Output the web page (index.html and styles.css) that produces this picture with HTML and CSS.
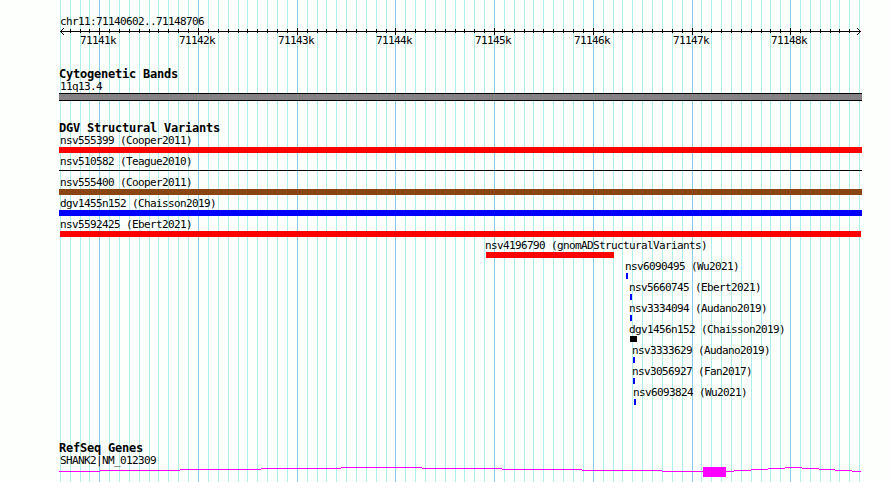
FILE: index.html
```
<!DOCTYPE html>
<html lang="en">
<head>
    <meta charset="UTF-8">
    <meta name="viewport" content="width=device-width, initial-scale=1.0">
    <title>chr11:71140602..71148706</title>
    <link rel="stylesheet" href="styles.css">
</head>
<body>
    <div class="browser">
        <svg class="grid" width="890" height="482" shape-rendering="crispEdges">
            <path id="minor" class="grid-minor"></path>
            <path id="major" class="grid-major"></path>
        </svg>

        <div class="panel">
            <div class="ruler">
                <div class="label">chr11:71140602..71148706</div>
                <svg class="axis" width="890" height="24">
                    <g shape-rendering="crispEdges">
                        <path class="axis-line" d="M60 5.5H861"></path>
                        <path id="ticks" class="axis-line"></path>
                        <path class="arrow" d="M60 5h1v1h-1zM61 4h1v1h-1zM61 6h1v1h-1zM62 3h1v1h-1zM62 7h1v1h-1zM63 2h1v1h-1zM63 8h1v1h-1z"></path>
                        <path class="arrow" d="M860 5h1v1h-1zM859 4h1v1h-1zM859 6h1v1h-1zM858 3h1v1h-1zM858 7h1v1h-1zM857 2h1v1h-1zM857 8h1v1h-1z"></path>
                    </g>
                    <g class="axis-text">
                        <text x="80" y="18">71141k</text>
                        <text x="179" y="18">71142k</text>
                        <text x="278" y="18">71143k</text>
                        <text x="376" y="18">71144k</text>
                        <text x="475" y="18">71145k</text>
                        <text x="574" y="18">71146k</text>
                        <text x="673" y="18">71147k</text>
                        <text x="771" y="18">71148k</text>
                    </g>
                </svg>
            </div>

            <div class="track cyto">
                <h2>Cytogenetic Bands</h2>
                <div class="label">11q13.4</div>
                <div class="band"></div>
            </div>

            <div class="track variants">
                <h2>DGV Structural Variants</h2>
                <div class="feature full"><div class="label">nsv555399 (Cooper2011)</div><div class="bar red"></div></div>
                <div class="feature full"><div class="label">nsv510582 (Teague2010)</div><div class="bar thin"></div></div>
                <div class="feature full"><div class="label">nsv555400 (Cooper2011)</div><div class="bar brown"></div></div>
                <div class="feature full"><div class="label">dgv1455n152 (Chaisson2019)</div><div class="bar blue"></div></div>
                <div class="feature" style="--start: 60px; --size: 801px"><div class="label">nsv5592425 (Ebert2021)</div><div class="bar red"></div></div>
                <div class="feature" style="--start: 486px; --size: 128px"><div class="label">nsv4196790 (gnomADStructuralVariants)</div><div class="bar red"></div></div>
                <div class="feature" style="--start: 626px; --size: 2px"><div class="label">nsv6090495 (Wu2021)</div><div class="bar blue"></div></div>
                <div class="feature" style="--start: 630px; --size: 2px"><div class="label">nsv5660745 (Ebert2021)</div><div class="bar blue"></div></div>
                <div class="feature" style="--start: 630px; --size: 2px"><div class="label">nsv3334094 (Audano2019)</div><div class="bar blue"></div></div>
                <div class="feature" style="--start: 630px; --size: 7px"><div class="label">dgv1456n152 (Chaisson2019)</div><div class="bar black"></div></div>
                <div class="feature" style="--start: 633px; --size: 2px"><div class="label">nsv3333629 (Audano2019)</div><div class="bar blue"></div></div>
                <div class="feature" style="--start: 633px; --size: 2px"><div class="label">nsv3056927 (Fan2017)</div><div class="bar blue"></div></div>
                <div class="feature" style="--start: 634px; --size: 2px"><div class="label">nsv6093824 (Wu2021)</div><div class="bar blue"></div></div>
            </div>

            <div class="track genes">
                <h2>RefSeq Genes</h2>
                <div class="label">SHANK2|NM_012309</div>
                <svg class="gene" width="890" height="10" shape-rendering="crispEdges">
                    <path class="intron" d="M59 4h41v1H59zM100 3h80v1h-80zM180 2h81v1h-81zM261 1h80v1h-80zM341 0h81v1h-81zM422 1h80v1h-80zM502 2h80v1h-80zM582 3h80v1h-80zM662 4h41v1h-41z"></path>
                    <rect class="exon" x="703" y="0" width="23" height="10"></rect>
                    <path class="intron" d="M726 4h8v1h-8zM734 3h17v1h-17zM751 2h17v1h-17zM768 1h17v1h-17zM785 0h17v1h-17zM802 1h17v1h-17zM819 2h16v1h-16zM835 3h17v1h-17zM852 4h9v1h-9z"></path>
                </svg>
            </div>
        </div>
    </div>

    <script>
        // one line per 100 bp, every 1 kb is a major one
        const lines = [
            60, 70, 80, 89, 99, 109, 119, 129, 139, 149, 158, 168, 178, 188, 198, 208, 218, 228, 238, 247,
            257, 267, 277, 287, 297, 307, 317, 326, 336, 346, 356, 366, 376, 386, 395, 405, 415, 425, 435, 445,
            455, 464, 474, 484, 494, 504, 514, 524, 533, 543, 553, 563, 573, 583, 593, 603, 613, 622, 632, 642,
            652, 662, 672, 682, 692, 701, 711, 721, 731, 741, 751, 761, 770, 780, 790, 800, 810, 820, 830, 839,
            849, 859
        ];
        let minor = '', major = '', ticks = '';

        lines.forEach((x, i) => {
            const isMajor = i % 10 === 4;
            if (isMajor) {
                major += `M${x} 0h1v482h-1z`;
            } else {
                minor += `M${x} 0h1v482h-1z`;
            }
            if (i > 0 && i < lines.length - 1) {
                ticks += isMajor ? `M${x + 0.5} 2V9` : `M${x + 0.5} 3V7`;
            }
        });

        document.getElementById('minor').setAttribute('d', minor);
        document.getElementById('major').setAttribute('d', major);
        document.getElementById('ticks').setAttribute('d', ticks);
    </script>
</body>
</html>
```
FILE: styles.css
```
body {
    margin: 0;
    background-color: #fdfffc;
    color: #000;
    overflow: hidden;
}
.browser {
    position: relative;
    width: 890px;
    height: 482px;
    overflow: hidden;
}
/* the grid runs behind every track */
.grid {
    position: absolute;
    top: 0;
    left: 0;
}
.grid-minor {
    fill: #afeeee;
}
.grid-major {
    fill: #87ceeb;
}
.panel {
    position: relative;
    display: flex;
    flex-direction: column;
    padding-top: 15px;
}
svg {
    display: block;
}
.label,
.axis-text {
    font-family: "DejaVu Sans Mono", monospace;
    font-size: 11px;
    letter-spacing: -0.622px;
    white-space: pre;
}
.label {
    height: 11px;
    line-height: 14px;
    margin-left: 60px;
}
.axis-line {
    stroke: #000;
    fill: none;
}
.ruler {
    height: 53px;
}
h2 {
    margin: 0 0 0 59px;
    height: 12px;
    font: bold 12px/12px "DejaVu Sans Mono", monospace;
    letter-spacing: -0.225px;
    white-space: pre;
}
.cyto {
    height: 54px;
}
.band {
    width: 803px;
    height: 8px;
    box-sizing: border-box;
    margin: 2px 0 0 59px;
    background-color: #848284;
    border: solid #000;
    border-width: 1px 0;
}
.variants {
    height: 320px;
}
.feature {
    height: 21px;
}
.feature .label {
    margin-left: max(60px, calc(var(--start) - 1px));
    height: 13px;
}
.bar {
    width: var(--size);
    height: 6px;
    margin-left: var(--start);
}
.full .label {
    margin-left: 60px;
}
.full .bar {
    width: 803px;
    margin-left: 59px;
}
.red {
    background-color: #f00;
}
.brown {
    background-color: #8b4513;
}
.blue {
    background-color: #00f;
}
.black {
    background-color: #000;
}
.full .thin {
    height: 1px;
    position: relative;
    top: 2px;
    background-color: #000;
}
.gene {
    margin-top: 2px;
}
.intron,
.exon {
    fill: #f0f;
}
```
